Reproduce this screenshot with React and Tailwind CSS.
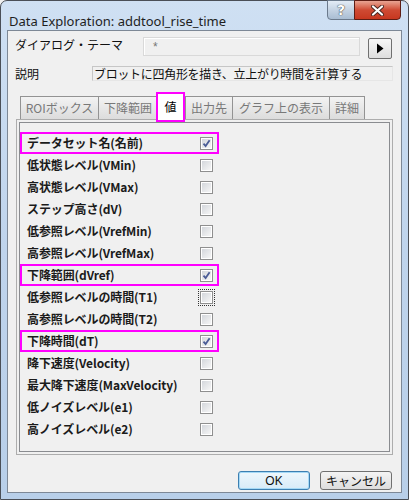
import React from "react"

const rows = [
  { label: "データセット名(名前)", checked: true, mark: true },
  { label: "低状態レベル(VMin)" },
  { label: "高状態レベル(VMax)" },
  { label: "ステップ高さ(dV)" },
  { label: "低参照レベル(VrefMin)" },
  { label: "高参照レベル(VrefMax)" },
  { label: "下降範囲(dVref)", checked: true, mark: true },
  { label: "低参照レベルの時間(T1)", focus: true },
  { label: "高参照レベルの時間(T2)" },
  { label: "下降時間(dT)", checked: true, mark: true },
  { label: "降下速度(Velocity)" },
  { label: "最大降下速度(MaxVelocity)" },
  { label: "低ノイズレベル(e1)" },
  { label: "高ノイズレベル(e2)" },
]

const tabs = [
  { label: "ROIボックス", w: "w-[79px]" },
  { label: "下降範囲", w: "w-[60px]" },
  { label: "値", active: true },
  { label: "出力先", w: "w-[48px]" },
  { label: "グラフ上の表示", w: "w-[98px]" },
  { label: "詳細", w: "w-[36px]" },
]

const CheckBox = ({ checked, focus }) => (
  <span className={`flex items-center justify-center w-[17px] h-[17px] ${focus ? "border border-dotted border-[#333]" : ""}`}>
    <span className="w-[13px] h-[13px] border border-[#8f8f8f] bg-white p-[1px]">
      <span className="flex items-center justify-center w-full h-full bg-gradient-to-br from-[#d4d7dc] to-[#f6f6f6]">
        {checked && (
          <svg width="9" height="9" viewBox="0 0 9 9">
            <path d="M1.5 4.6 L3.6 7 L7.6 1.2" fill="none" stroke="#4a5c96" strokeWidth="1.8" />
          </svg>
        )}
      </span>
    </span>
  </span>
)

const Row = ({ label, checked, mark, focus }) => (
  <div className={`flex items-center justify-between w-[199px] h-[22px] pl-[5px] pr-[4px] border-2 ${mark ? "border-[#ff00ff]" : "border-transparent"}`}>
    <span className="text-[12px] leading-[14px] font-bold text-[#1b1b1b] tracking-[-0.1px]">{label}</span>
    <span className="-mr-[2px]"><CheckBox checked={checked} focus={focus} /></span>
  </div>
)

const App = () => {
  return (
    <div className="w-[409px] h-[500px] bg-[#f0f0f0] font-['Noto_Sans_CJK_JP',sans-serif]">
      <div className="relative flex flex-col w-full h-full rounded-t-[7px] border border-[#4a4f57] bg-gradient-to-b from-[#cfe0f3] via-[#bfd4ec] to-[#b8cfe9]">
        {/* title bar */}
        <div className="h-[29px] shrink-0 pl-[8px] pt-[6px]">
          <span className="text-[13px] leading-[16px] text-[#1e1e1e] font-['Noto_Sans','Liberation_Sans',sans-serif]">Data Exploration: addtool_rise_time</span>
        </div>
        <div className="absolute top-[-1px] right-[7px] flex">
          <div className="flex items-center justify-center w-[28px] h-[20px] rounded-bl-[4px] border border-[#6b7a8c] bg-gradient-to-b from-[#e3ecf6] via-[#c4d3e3] to-[#a9bdd3]">
            <span className="text-[14px] leading-none font-bold text-white font-['DejaVu_Sans',sans-serif] [text-shadow:0_0_1px_#333,0_0_1px_#333]">?</span>
          </div>
          <div className="flex items-center justify-center w-[47px] h-[20px] -ml-[1px] rounded-br-[4px] border border-[#5e1d14] bg-gradient-to-b from-[#e8a493] via-[#cf4a33] to-[#c7371f]">
            <svg width="15" height="11" viewBox="0 0 15 11">
              <path d="M3 1.5 L12 9.5 M12 1.5 L3 9.5" stroke="#4a2620" strokeWidth="4" strokeLinecap="round" />
              <path d="M3 1.5 L12 9.5 M12 1.5 L3 9.5" stroke="#ffffff" strokeWidth="2.2" strokeLinecap="round" />
            </svg>
          </div>
        </div>

        {/* client area */}
        <div className="flex-1 mx-[6px] mb-[6px] border border-[#7d8896] bg-[#f0f0f0] flex flex-col">
          {/* theme */}
          <div className="flex items-start mt-[6px] ml-[7px]">
            <span className="w-[128px] pt-[1px] text-[12px] leading-[14px] text-[#111]">ダイアログ・テーマ</span>
            <div className="w-[217px] h-[19px] border border-[#d9d9d9] shadow-[inset_1px_1px_0_#ffffff] flex items-center pl-[9px]">
              <span className="text-[12px] leading-none text-[#777] font-['Liberation_Sans',sans-serif]">*</span>
            </div>
            <div className="ml-[8px] mt-[1px] w-[24px] h-[21px] border border-[#707070] rounded-[2px] bg-gradient-to-b from-[#f7f7f7] to-[#dedede] flex items-center justify-center">
              <svg width="8" height="11" viewBox="0 0 8 11"><path d="M1 0.5 L7.5 5.5 L1 10.5 Z" fill="#000" /></svg>
            </div>
          </div>

          {/* description */}
          <div className="flex items-center mt-[7px] ml-[7px]">
            <span className="w-[77px] text-[12px] leading-[14px] text-[#111]">説明</span>
            <div className="w-[301px] h-[15px] border border-[#c6c6c6] border-r-[#e6e6e6] border-b-[#e6e6e6] flex items-center pl-[1px] overflow-hidden">
              <span className="text-[12px] leading-[13px] text-[#111] tracking-[-0.3px] whitespace-nowrap">ブロットに四角形を描き、立上がり時間を計算する</span>
            </div>
          </div>

          {/* tabs */}
          <div className="flex items-end ml-[12px] mt-[9px] h-[29px] relative z-10">
            {tabs.map((t) =>
              t.active ? (
                <div key={t.label} className="w-[29px] h-[30px] -ml-[1px] -mb-[3px] border-2 border-[#ff00ff] bg-white flex items-center justify-center">
                  <span className="text-[12px] leading-none text-[#000]">{t.label}</span>
                </div>
              ) : (
                <div key={t.label} className={`${t.w} h-[23px] -mr-[1px] border border-b-0 border-[#939393] bg-gradient-to-b from-[#f3f3f3] to-[#dcdcdc] flex items-center justify-center`}>
                  <span className="text-[12px] leading-none text-[#787878] whitespace-nowrap">{t.label}</span>
                </div>
              )
            )}
          </div>

          {/* tab panel */}
          <div className="ml-[8px] w-[377px] h-[336px] border border-[#adadad]">
            <div className="mt-[2px] ml-[2px] w-[371px] h-[330px] border border-[#8a8c90] pt-[9px]">
              {rows.map((r) => (
                <Row key={r.label} {...r} />
              ))}
            </div>
          </div>

          {/* buttons */}
          <div className="flex justify-end gap-[10px] mt-[16px] pr-[9px]">
            <button className="w-[72px] h-[19px] rounded-[3px] border border-[#3c7fb1] bg-gradient-to-b from-[#eef7fc] to-[#d7ebf8] shadow-[inset_0_0_0_1px_#a5d9f6] flex items-center justify-center">
              <span className="text-[12px] leading-none text-[#111] font-['Liberation_Sans',sans-serif]">OK</span>
            </button>
            <button className="w-[72px] h-[19px] rounded-[3px] border border-[#707070] bg-gradient-to-b from-[#f4f4f4] to-[#dddddd] flex items-center justify-center">
              <span className="text-[12px] leading-none text-[#111]">キャンセル</span>
            </button>
          </div>
        </div>
      </div>
    </div>
  )
}

export default App
